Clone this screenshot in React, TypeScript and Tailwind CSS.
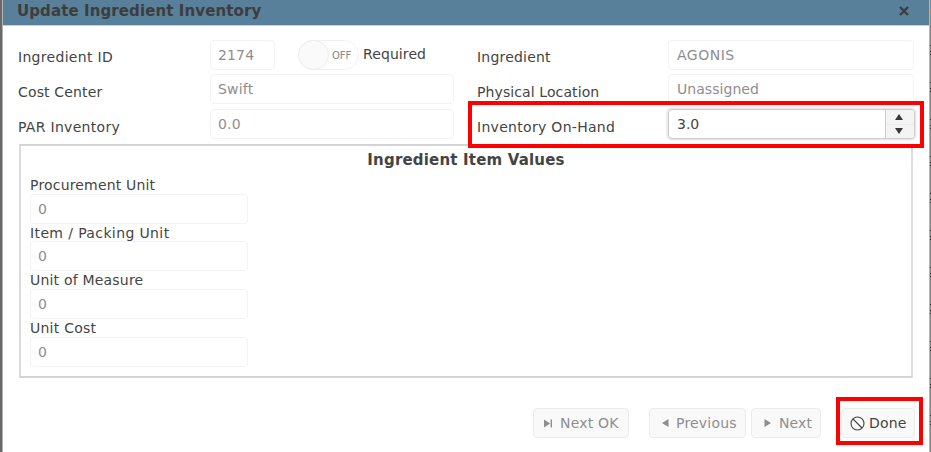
import React from 'react';

function Field({ value, className = '' }: { value: string; className?: string }) {
  return (
    <div
      className={`flex h-[30px] items-center rounded-[4px] border border-[#f3f3f3] bg-white pl-[7px] text-[#8e8e8e] ${className}`}
    >
      {value}
    </div>
  );
}

function Label({ text, className = '' }: { text: string; className?: string }) {
  return <div className={`h-[30px] shrink-0 whitespace-nowrap pt-[3px] leading-[30px] ${className}`}>{text}</div>;
}

function Toggle() {
  return (
    <div className="ml-[23px] flex h-[30px] w-[61px] shrink-0 items-center rounded-full border border-[#f1f1f1] bg-white">
      <div className="-ml-px h-[30px] w-[31px] shrink-0 rounded-full border border-[#eeeeee] bg-[#fafafa]" />
      <span className="ml-[3px] pt-px text-[10px] text-[#888888]">OFF</span>
    </div>
  );
}

function Spinner({ value }: { value: string }) {
  return (
    <div className="flex h-[30px] w-[247px] overflow-hidden rounded-[4px] border border-[#cccccc] bg-white shadow-[0_0_3px_1px_#dddddd]">
      <div className="flex flex-1 items-center pl-[8px] text-[#444444]">{value}</div>
      <div className="flex w-[29px] flex-col border-l border-[#cccccc] bg-[#f4f4f4]">
        <div className="flex flex-1 items-center justify-center border-b border-[#ebebeb] pr-[2px]">
          <svg width="8" height="6" viewBox="0 0 8 6" fill="#383838"><path d="M4 0 8 6H0z" /></svg>
        </div>
        <div className="flex flex-1 items-center justify-center pr-[2px]">
          <svg width="8" height="6" viewBox="0 0 8 6" fill="#383838"><path d="M0 0H8L4 6z" /></svg>
        </div>
      </div>
    </div>
  );
}

const units = [
  { label: 'Procurement Unit', gap: 'h-[47px]', track: 'h-[17px] tracking-[0.18px]' },
  { label: 'Item / Packing Unit', gap: 'h-[48px]', track: 'h-[17px] pt-px tracking-[0.38px]' },
  { label: 'Unit of Measure', gap: 'h-[48px]', track: 'h-[17px] tracking-[0.2px]' },
  { label: 'Unit Cost', gap: 'h-[47px]', track: 'h-[17px] tracking-[0.25px]' },
];

const edgeMarks = [45, 82, 119, 156, 193, 230, 267, 304, 341, 378, 415];

function Button({ children, className = '' }: { children: React.ReactNode; className?: string }) {
  return (
    <button
      className={`flex h-[30px] shrink-0 items-center whitespace-nowrap rounded-[4px] border border-[#ececec] bg-[#f9f9f9] text-[#8e8e8e] ${className}`}
    >
      {children}
    </button>
  );
}

export default function App() {
  return (
    <div className="relative flex h-[452px] w-[931px] overflow-hidden bg-[#858585] font-['DejaVu_Sans',Verdana,sans-serif] text-[14px] text-[#444444]">
      <div className="w-[2px] shrink-0 bg-[#696969]" />
      <div className="flex w-[928px] shrink-0 flex-col border-x border-[#b4b4b4] bg-white">
        <header className="flex h-[26px] shrink-0 items-start justify-between border-b border-[#c0d2e2] bg-[#58809b] pl-[14px] pr-[20px] text-[#3d3d3d]">
          <h1 className="text-[15px] font-bold leading-[22px] tracking-[0.1px]">Update Ingredient Inventory</h1>
          <svg className="mt-[6px]" width="10" height="10" viewBox="0 0 10 10" stroke="#3d3d3d" strokeWidth="2.4">
            <path d="M1 1 9 9M9 1 1 9" />
          </svg>
        </header>

        <div className="flex h-[118px] shrink-0 pl-[15px] pt-[14px]">
          <div className="flex w-[459px] shrink-0 flex-col">
            <div className="flex h-[34px]">
              <Label text="Ingredient ID" className="-mt-px w-[192px] tracking-[0.3px]" />
              <Field value="2174" className="w-[65px] shrink-0 tracking-[0.15px]" />
              <Toggle />
              <span className="ml-[4px] leading-[28px] tracking-[0.1px]">Required</span>
            </div>
            <div className="flex h-[35px]">
              <Label text="Cost Center" className="w-[192px] tracking-[0.15px]" />
              <Field value="Swift" className="w-[244px] tracking-[0.2px]" />
            </div>
            <div className="flex h-[35px]">
              <Label text="PAR Inventory" className="w-[192px] tracking-[0.3px]" />
              <Field value="0.0" className="w-[244px] tracking-[0.15px]" />
            </div>
          </div>
          <div className="flex w-[440px] shrink-0 flex-col">
            <div className="flex h-[34px]">
              <Label text="Ingredient" className="-mt-px w-[191px] tracking-[0.2px]" />
              <Field value="AGONIS" className="w-[246px] pl-[8px] tracking-[0.5px]" />
            </div>
            <div className="flex h-[35px]">
              <Label text="Physical Location" className="w-[191px] tracking-[0.1px]" />
              <Field value="Unassigned" className="w-[246px] pl-[8px] tracking-[0.05px]" />
            </div>
            <div className="flex h-[35px]">
              <Label text="Inventory On-Hand" className="w-[191px] tracking-[0.3px]" />
              <Spinner value="3.0" />
            </div>
          </div>
        </div>

        <section className="ml-[16px] h-[234px] w-[894px] shrink-0 border-2 border-x-[#dcdcdc] border-y-[#d4d4d4] pl-[8px]">
          <h2 className="h-[31px] pr-[8px] pt-px text-center text-[15px] font-bold leading-[27px] tracking-[0.18px]">Ingredient Item Values</h2>
          <div className="pl-px">
            {units.map((u) => (
              <div key={u.label} className={u.gap}>
                <div className={`leading-[16px] ${u.track}`}>{u.label}</div>
                <Field value="0" className="w-[218px]" />
              </div>
            ))}
          </div>
        </section>

        <footer className="flex pl-[530px] pt-[30px]">
          <Button className="w-[96px] pl-[10px] tracking-[0.2px]">
            <svg width="9" height="9" viewBox="0 0 9 9" fill="#8e8e8e"><path d="M0 0.5 6.2 4.5 0 8.5zM6.6 0.5H8V8.5H6.6z" /></svg>
            <span className="ml-[7px]">Next OK</span>
          </Button>
          <Button className="ml-[20px] w-[97px] pl-[12px] tracking-[0.2px]">
            <svg width="7" height="8" viewBox="0 0 7 8" fill="#8e8e8e"><path d="M6.5 0V8L0 4z" /></svg>
            <span className="ml-[7px]">Previous</span>
          </Button>
          <Button className="ml-[5px] w-[70px] pl-[12px] tracking-[0.1px]">
            <svg width="7" height="8" viewBox="0 0 7 8" fill="#8e8e8e"><path d="M0.5 0V8L7 4z" /></svg>
            <span className="ml-[8px]">Next</span>
          </Button>
          <Button className="ml-[20px] w-[74px] bg-[#f4f4f4] pl-[8px] tracking-[0.15px] text-[#444444]">
            <svg width="15" height="15" viewBox="0 0 15 15" fill="none" stroke="#444444" strokeWidth="1.1">
              <circle cx="7.5" cy="7.5" r="6.5" />
              <path d="M3 3 12 12" />
            </svg>
            <span className="ml-[4px]">Done</span>
          </Button>
        </footer>
      </div>

      <svg className="absolute right-0 top-0" width="1" height="452" viewBox="0 0 1 452" fill="#2c2c2c">
        <rect x="0" y="9" width="1" height="6" fill="#a8845c" />
        {edgeMarks.map((y) => (
          <g key={y}>
            <rect x="0" y={y} width="1" height="1" />
            <rect x="0" y={y + 6} width="1" height="1" />
            <rect x="0" y={y + 9} width="1" height="1" />
          </g>
        ))}
      </svg>
      <div className="absolute left-[468px] top-[101px] h-[47px] w-[456px] border-4 border-[#ff0000]" />
      <div className="absolute left-[836px] top-[397px] h-[48px] w-[87px] border-4 border-[#ff0000]" />
    </div>
  );
}
